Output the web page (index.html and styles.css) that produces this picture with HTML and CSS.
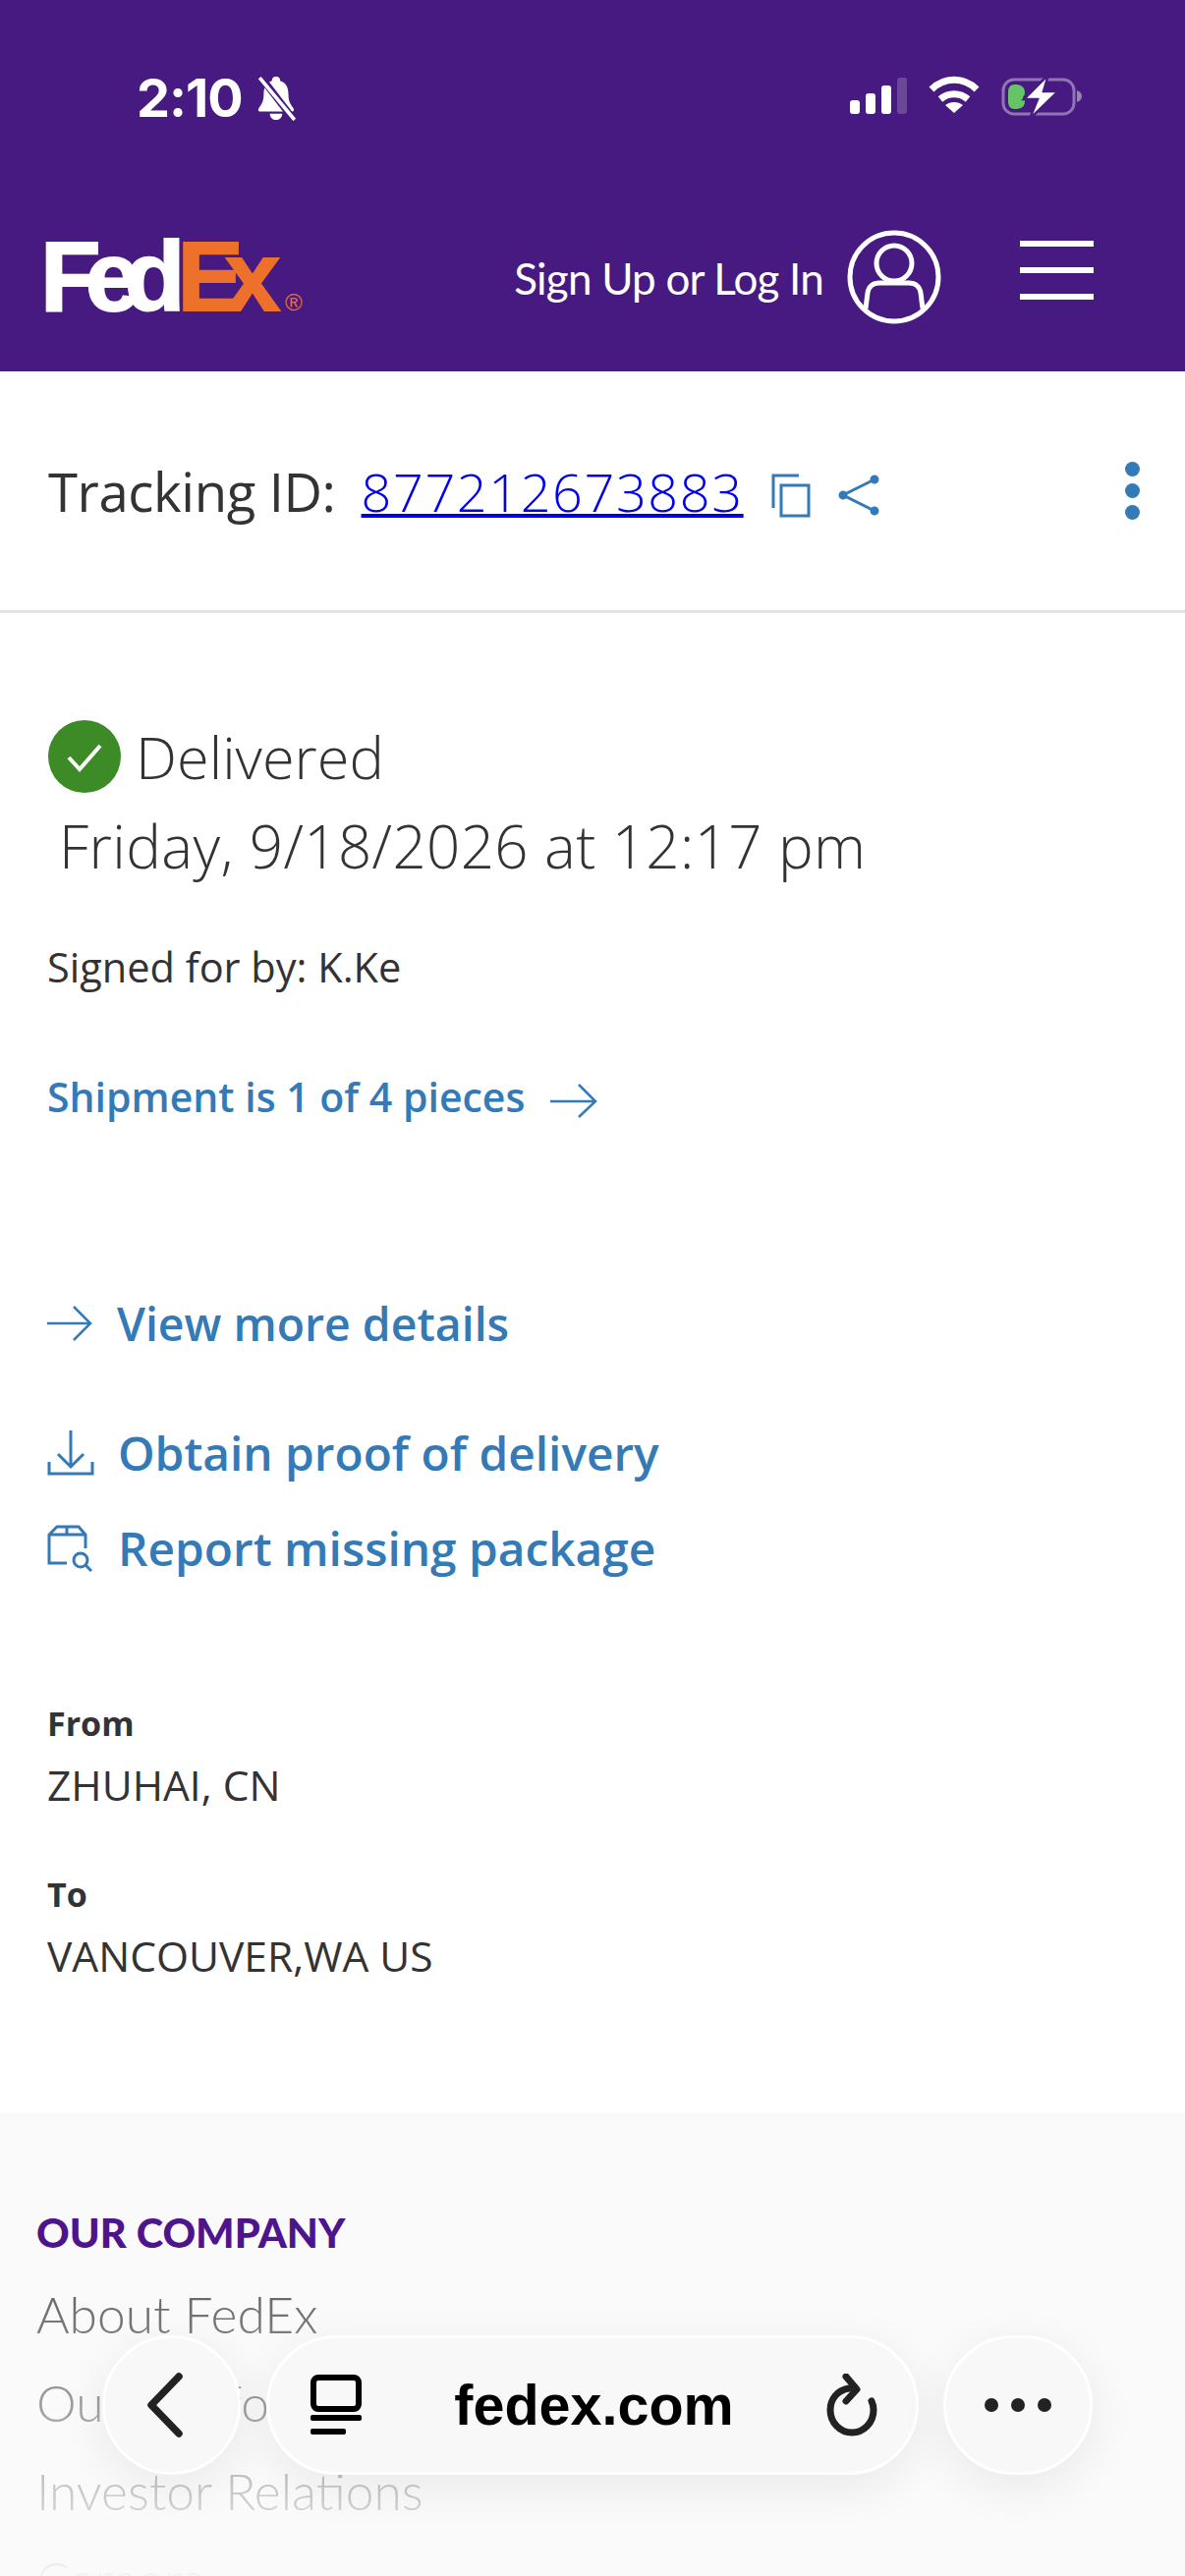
FILE: index.html
```html
<!DOCTYPE html>
<html lang="en">

<head>
    <meta charset="UTF-8">
    <meta name="viewport" content="width=device-width, initial-scale=1.0">
    <title>FedEx Tracking</title>

    <link rel="stylesheet" href="styles.css">
</head>

<body>
    <div class="phone">
        <header class="top">
            <div class="status">
                <div class="status-left">
                    <span class="clock">2:10</span>
                    <svg class="bell" width="46" height="46" viewBox="0 0 42 44">
                        <path fill="#fff" d="M20 1c3 0 4 2 4 4 6 2 8 7 8 13 0 7 2 10 5 14 1 2 0 3-2 3H5c-2 0-3-1-2-3 3-4 5-7 5-14 0-6 2-11 8-13 0-2 1-4 4-4z" />
                        <path fill="#fff" d="M14 37h12c0 4-3 6-6 6s-6-2-6-6z" />
                        <path stroke="#461a80" stroke-width="7" d="M5 1l33 43" />
                        <path stroke="#fff" stroke-width="3.5" d="M4 2l34 41" />
                    </svg>
                </div>
                <div class="status-right">
                    <div class="signal">
                        <span class="bar bar-1"></span>
                        <span class="bar bar-2"></span>
                        <span class="bar bar-3"></span>
                        <span class="bar bar-4"></span>
                    </div>
                    <svg class="wifi" width="52" height="38" viewBox="0 0 52 38" fill="none" stroke="#fff">
                        <path stroke-width="7" d="M3 14c13-13 33-13 46 0" />
                        <path stroke-width="7" d="M12 24c8-7 20-7 28 0" />
                        <path fill="#fff" stroke="none" d="M17 30c5-4 13-4 18 0l-9 8z" />
                    </svg>
                    <svg class="battery" width="84" height="42" viewBox="0 0 84 42">
                        <rect x="2" y="4" width="72" height="35" rx="11" fill="none" stroke="#fff" stroke-opacity=".4" stroke-width="3" />
                        <path fill="#fff" fill-opacity=".45" d="M77 15c3 1 5 3 5 6s-2 5-5 6z" />
                        <path fill="#65c466" d="M14 9c6 0 10 2 10 9 0 2-2 3-2 4 0 2 2 2 2 4 0 6-4 8-10 8-5 0-7-3-7-8V17c0-5 2-8 7-8z" />
                        <path fill="#fff" stroke="#461a80" stroke-width="2.5" d="M48-1L23 24h14l-8 20 29-28H43z" />
                    </svg>
                </div>
            </div>
            <nav class="nav">
                <a class="logo"><span class="logo-fed">Fed</span><span class="logo-ex">Ex</span><span class="logo-reg">®</span></a>
                <div class="nav-right">
                    <span class="login">Sign Up or Log In</span>
                    <svg class="avatar" width="96" height="96" viewBox="0 0 96 96" fill="none" stroke="#fff" stroke-width="5">
                        <circle cx="48" cy="48" r="45" />
                        <circle cx="48" cy="34" r="18" />
                        <path d="M19 80l2-16c1-7 6-10 12-10h30c6 0 11 3 12 10l2 16" />
                    </svg>
                    <div class="burger">
                        <span></span>
                        <span></span>
                        <span></span>
                    </div>
                </div>
            </nav>
        </header>

        <div class="tracking">
            <span class="tracking-label">Tracking ID:</span>
            <a class="tracking-number" href="#">877212673883</a>
            <svg class="copy" width="40" height="46" viewBox="0 0 40 46" fill="none" stroke="#337ab7" stroke-width="3">
                <rect x="10" y="13" width="28" height="31" />
                <path d="M2 36V3h26" />
            </svg>
            <svg class="share" width="42" height="44" viewBox="0 0 42 44" fill="#337ab7" stroke="#337ab7" stroke-width="3">
                <path fill="none" d="M37 6L5 22l32 16" />
                <circle cx="37" cy="6" r="3" />
                <circle cx="5" cy="22" r="3" />
                <circle cx="37" cy="38" r="3" />
            </svg>
            <div class="kebab">
                <span></span>
                <span></span>
                <span></span>
            </div>
        </div>

        <main class="summary">
            <div class="status-line">
                <svg class="check" width="74" height="74" viewBox="0 0 74 74">
                    <circle cx="37" cy="37" r="37" fill="#3d8b26" />
                    <path d="M21 38l11 12 21-24" fill="none" stroke="#fff" stroke-width="4" />
                </svg>
                <span>Delivered</span>
            </div>
            <p class="delivery-date">Friday, 9/18/2026 at 12:17 pm</p>
            <p class="signed">Signed for by: K.Ke</p>
            <a class="pieces">Shipment is 1 of 4 pieces
                <svg width="48" height="36" viewBox="0 0 48 36" fill="none" stroke="#337ab7" stroke-width="2.5">
                    <path d="M0 19h46M29 2l17 17-17 16" />
                </svg>
            </a>

            <ul class="actions">
                <li class="action-view">
                    <svg width="46" height="36" viewBox="0 0 46 36" fill="none" stroke="#337ab7" stroke-width="2.5">
                        <path d="M0 18h44M27 1l17 17-17 17" />
                    </svg>
                    <a>View more details</a>
                </li>
                <li class="action-proof">
                    <svg width="48" height="46" viewBox="0 0 48 46" fill="none" stroke="#337ab7" stroke-width="3">
                        <path d="M24 0v36M11 24l13 13 13-13M2 32v12h44V32" />
                    </svg>
                    <a>Obtain proof of delivery</a>
                </li>
                <li class="action-report">
                    <svg width="48" height="48" viewBox="0 0 48 48" fill="none" stroke="#337ab7" stroke-width="3">
                        <path d="M20 39H2V10L10 2h22l7 8v14M2 10h37M20 2v8" />
                        <circle cx="34" cy="36" r="7" />
                        <path d="M39 41l6 6" />
                    </svg>
                    <a>Report missing package</a>
                </li>
            </ul>

            <dl class="route">
                <dt>From</dt>
                <dd>ZHUHAI, CN</dd>
                <dt>To</dt>
                <dd>VANCOUVER,WA US</dd>
            </dl>
        </main>

        <footer class="footer">
            <h2>OUR COMPANY</h2>
            <ul>
                <li>About FedEx</li>
                <li>Our Portfolio</li>
                <li>Investor Relations</li>
                <li>Careers</li>
            </ul>
        </footer>

        <div class="fade"></div>

        <div class="browser-bar">
            <button class="round back">
                <svg width="44" height="68" viewBox="0 0 44 68" fill="none" stroke="#222" stroke-width="7.5" stroke-linecap="round" stroke-linejoin="round">
                    <path d="M36 5L8 34l28 29" />
                </svg>
            </button>
            <div class="address">
                <svg class="tabs" width="52" height="62" viewBox="0 0 52 62">
                    <rect x="3" y="3" width="46" height="32" rx="5" fill="none" stroke="#000" stroke-width="6" />
                    <rect x="0" y="41" width="52" height="6" rx="2" />
                    <rect x="0" y="55" width="36" height="6" rx="2" />
                </svg>
                <span class="domain">fedex.com</span>
                <svg class="reload" width="52" height="64" viewBox="0 0 52 64" fill="none" stroke="#222" stroke-width="7" stroke-linecap="round" stroke-linejoin="round">
                    <path d="M23 15C11 17 4 26 4 37c0 13 10 23 22 23s22-10 22-23c0-3-1-7-2-9" />
                    <path d="M20 3l11 13-11 12" />
                </svg>
            </div>
            <button class="round more">
                <span></span>
                <span></span>
                <span></span>
            </button>
        </div>
    </div>
</body>

</html>
```

FILE: styles.css
```css
* {
    margin: 0;
    padding: 0;
    box-sizing: border-box;
}

body {
    background-color: white;
    font-family: "Open Sans", sans-serif;
    color: #333;
}

ul {
    list-style: none;
}

.phone {
    position: relative;
    width: 1206px;
    height: 2622px;
    overflow: hidden;
}

/* purple header */
.top {
    height: 378px;
    background-color: #461a80;
}

.status {
    height: 245px;
    padding: 77px 103px 0 139px;
    display: flex;
    justify-content: space-between;
    align-items: flex-start;
}

.status-left {
    display: flex;
    align-items: center;
    gap: 12px;
}

.clock {
    font-family: "Inter", sans-serif;
    font-weight: 700;
    font-size: 54px;
    line-height: 42px;
    color: white;
    letter-spacing: -1px;
}

.status-right {
    display: flex;
    align-items: flex-start;
    gap: 22px;
}

.signal {
    margin-top: 2px;
    height: 37px;
    display: flex;
    align-items: flex-end;
    gap: 6px;
}

.bar {
    width: 10px;
    border-radius: 3px;
    background-color: white;
}

.bar-1 { height: 14px; }
.bar-2 { height: 21px; }
.bar-3 { height: 29px; }
.bar-4 {
    height: 37px;
    background-color: rgba(255, 255, 255, 0.2);
}

.nav {
    height: 133px;
    position: relative;
    display: flex;
    justify-content: space-between;
    padding: 0 93px 0 41px;
}

.logo {
    display: flex;
    align-items: baseline;
    height: 72px;
    font-family: "Liberation Sans", sans-serif;
    font-weight: bold;
    font-size: 101px;
    line-height: 72px;
    -webkit-text-stroke: 2px;
}

.logo-fed {
    color: white;
    letter-spacing: -16px;
}

.logo-ex {
    color: #ed702b;
    margin-left: 8px;
    letter-spacing: -19px;
}

.logo-reg {
    font-size: 24px;
    font-weight: normal;
    -webkit-text-stroke: 0;
    color: #ed702b;
    margin-left: 24px;
}

.nav-right {
    display: flex;
    align-items: flex-start;
}

.login {
    margin-top: 10px;
    font-family: "Lato", sans-serif;
    font-size: 44px;
    line-height: 56px;
    letter-spacing: -0.8px;
    color: white;
}

.avatar {
    margin: -11px 0 0 24px;
}

.burger {
    width: 75px;
    margin-left: 80px;
    display: flex;
    flex-direction: column;
    gap: 21px;
}

.burger span {
    height: 6px;
    background-color: white;
}

/* tracking row */
.tracking {
    height: 246px;
    border-bottom: 3px solid #e3e3e3;
    padding: 0 46px 0 49px;
    display: flex;
    align-items: center;
}

.tracking-label {
    font-size: 54.5px;
    letter-spacing: -0.4px;
}

.tracking-number {
    margin-left: 26px;
    font-size: 54px;
    font-weight: 300;
    letter-spacing: 1.6px;
    color: #0000ee;
    text-decoration-thickness: 4px;
}

.copy {
    margin: 8px 0 0 28px;
}

.share {
    margin: 8px 0 0 28px;
}

.kebab {
    margin-left: auto;
    display: flex;
    flex-direction: column;
    gap: 7px;
}

.kebab span {
    width: 15px;
    height: 15px;
    border-radius: 50%;
    background-color: #337ab7;
}

/* shipment summary */
.summary {
    padding: 109px 48px 0;
}

.status-line {
    display: flex;
    align-items: center;
    gap: 15px;
    font-size: 59.5px;
    font-weight: 300;
    line-height: 74px;
}

.check {
    margin-left: 1px;
}

.delivery-date {
    margin: 14px 0 0 12px;
    font-size: 60px;
    font-weight: 300;
    line-height: 80px;
    letter-spacing: 0.4px;
}

.signed {
    margin-top: 56px;
    font-size: 41.5px;
    line-height: 54px;
}

.pieces {
    margin-top: 78px;
    display: flex;
    align-items: center;
    gap: 26px;
    font-size: 41px;
    font-weight: 600;
    line-height: 54px;
    color: #337ab7;
}

.pieces svg {
    margin-top: 8px;
}

.actions {
    margin-top: 173px;
}

.actions li {
    display: flex;
    align-items: center;
    font-size: 47.8px;
    font-weight: 600;
    line-height: 62px;
    color: #337ab7;
}

.actions svg {
    flex-shrink: 0;
}

.actions .action-view {
    font-size: 46.4px;
}

.action-view a {
    margin-left: 25px;
}

.action-proof {
    margin-top: 70px;
}

.action-proof a,
.action-report a {
    margin-left: 24px;
}

.action-report {
    margin-top: 35px;
}

.route {
    margin-top: 122px;
    line-height: 50px;
}

.route dt {
    font-size: 34px;
    font-weight: 700;
}

.route dd {
    margin: 13px 0 61px;
    font-size: 42.5px;
}

/* footer, runs under the browser bar */
.footer {
    position: absolute;
    top: 2150px;
    left: 0;
    right: 0;
    bottom: 0;
    padding: 94px 37px 0;
    background-color: #fafafa;
    font-family: "Lato", sans-serif;
}

.footer h2 {
    font-size: 41.6px;
    font-weight: 900;
    line-height: 56px;
    color: #4d148c;
}

.footer ul {
    margin-top: 10px;
}

.footer li {
    font-size: 51.5px;
    font-weight: 300;
    line-height: 90px;
    color: #666;
}

.fade {
    position: absolute;
    left: 0;
    right: 0;
    top: 2330px;
    bottom: 0;
    background: linear-gradient(to bottom, rgba(250, 250, 250, 0), rgba(250, 250, 250, 0.95));
}

/* safari bottom bar */
.browser-bar {
    position: absolute;
    left: 104px;
    top: 2377px;
    width: 1008px;
    height: 142px;
    display: flex;
    justify-content: space-between;
}

.round,
.address {
    height: 142px;
    background-color: #f8f8f8;
    border: 3px solid white;
    border-radius: 71px;
    box-shadow: 0 12px 50px rgba(0, 0, 0, 0.07);
}

.round {
    display: flex;
    align-items: center;
    justify-content: center;
}

.back {
    width: 141px;
}

.back svg {
    margin-left: -14px;
}

.more {
    width: 152px;
    gap: 13px;
}

.more span {
    width: 14px;
    height: 14px;
    border-radius: 50%;
    background-color: #222;
}

.address {
    width: 664px;
    padding: 0 38px 0 42px;
    display: flex;
    align-items: center;
    justify-content: space-between;
}

.domain {
    font-family: "Liberation Sans", sans-serif;
    font-weight: bold;
    font-size: 57.5px;
    color: black;
}
```
